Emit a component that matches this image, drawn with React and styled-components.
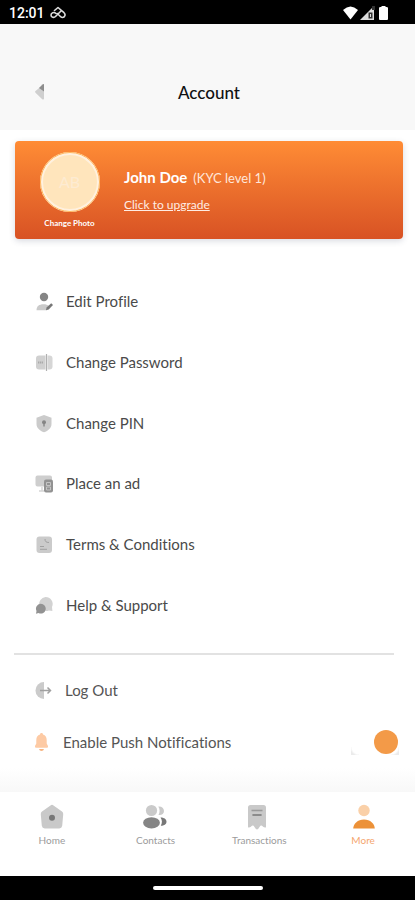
import React, { useState } from "react";
import styled, { createGlobalStyle } from "styled-components";

const GlobalStyle = createGlobalStyle`
  * {
    box-sizing: border-box;
  }

  body {
    margin: 0;
    background: #fff;
    font-family: Lato, "Liberation Sans", sans-serif;
    font-variant-ligatures: none;
  }

  button {
    border: 0;
    padding: 0;
    background: none;
    font-family: inherit;
    font-variant-ligatures: inherit;
    cursor: pointer;
  }
`;

const Screen = styled.div`
  display: flex;
  flex-direction: column;
  min-height: 100vh;
  background: #fff;
`;

const StatusBar = styled.div`
  display: flex;
  align-items: center;
  justify-content: space-between;
  height: 24px;
  padding: 2px 22px 0 9px;
  background: #000;
  color: #fff;
  font-family: Roboto, sans-serif;
  font-size: 14px;
  font-weight: 500;
`;

const StatusGroup = styled.div`
  display: flex;
  align-items: center;
  gap: ${(props) => props.$gap}px;
`;

const Header = styled.header`
  display: grid;
  grid-template-columns: 80px 1fr 80px;
  align-items: center;
  height: 106px;
  padding-top: 31px;
  background: #f8f8f8;
`;

const BackButton = styled.button`
  display: flex;
  padding: 6px 0 8px 34px;
`;

const Title = styled.h1`
  margin: 0;
  padding-left: 3px;
  color: #111;
  font-size: 17px;
  font-weight: 500;
  line-height: 24px;
  text-align: center;
`;

const Main = styled.main`
  flex: 1;
  display: flex;
  flex-direction: column;
`;

const ProfileCard = styled.section`
  display: flex;
  gap: 24px;
  height: 98px;
  margin: 11px 12px 0 15px;
  padding: 11px 24px 0;
  border-radius: 4px;
  background: linear-gradient(#ff8c35, #d85224);
  box-shadow: 0 2px 6px rgba(60, 70, 100, 0.2);
  color: #fff;
`;

const PhotoButton = styled.button`
  display: flex;
  flex-direction: column;
  align-items: center;
  gap: 5px;
  width: 61px;
  color: #fff;
  font-size: 8px;
  font-weight: 700;
  line-height: 12px;
  white-space: nowrap;
`;

const Avatar = styled.span`
  display: flex;
  align-items: center;
  justify-content: center;
  width: 60px;
  height: 60px;
  border: 3px solid #fff1df;
  border-radius: 50%;
  outline: 1px solid #ffb65c;
  outline-offset: -1px;
  background: #ffe5bc;
  color: #fdebd2;
  font-size: 16px;
  font-weight: 400;
`;

const ProfileText = styled.div`
  display: flex;
  flex-direction: column;
  align-items: flex-start;
  gap: 9px;
  padding-top: 15px;
`;

const Name = styled.div`
  display: flex;
  align-items: baseline;
  gap: 6px;
  font-size: 15px;
  font-weight: 700;
  line-height: 20px;
`;

const Level = styled.span`
  color: #ffe6da;
  font-size: 13px;
  font-weight: 400;
`;

const UpgradeLink = styled.a`
  color: #ffede4;
  font-size: 12px;
  line-height: 16px;
`;

const Menu = styled.nav`
  display: flex;
  flex-direction: column;
  min-height: 364px;
  margin-top: 32px;
`;

const MenuButton = styled.button`
  flex: 1;
  display: flex;
  align-items: center;
  gap: 11px;
  padding: 0 35px;
  color: #4a4a4a;
  font-size: 15px;
  line-height: 20px;
`;

const Divider = styled.hr`
  height: 2px;
  margin: 18px 21px 0 14px;
  border: 0;
  background: #e2e2e2;
`;

const Extras = styled.div`
  display: flex;
  flex-direction: column;
  padding-top: 9px;
`;

const ExtraRow = styled.div`
  display: flex;
  align-items: center;
  justify-content: space-between;
  height: 52px;
  padding: 0 16px 0 34px;
  color: #555;
  font-size: 15px;
  line-height: 20px;
`;

const LogoutButton = styled.button`
  display: flex;
  align-items: center;
  gap: 11px;
  color: inherit;
  font-size: 15px;
  line-height: 20px;
`;

const SwitchLabel = styled.label`
  display: flex;
  align-items: center;
  gap: 14px;
`;

const Switch = styled.input`
  appearance: none;
  display: flex;
  align-items: center;
  justify-content: ${(props) => (props.checked ? "flex-end" : "flex-start")};
  width: 48px;
  height: 26px;
  margin: 0;
  padding-right: 1px;
  background: radial-gradient(circle at 100% 0, #fff 7px, #ebebeb 9px) 0 100% / 8px 8px no-repeat,
    radial-gradient(circle at 0 0, #fff 7px, #ebebeb 9px) 100% 100% / 8px 8px no-repeat;
  cursor: pointer;

  &::before {
    content: "";
    width: 24px;
    height: 24px;
    border-radius: 50%;
    background: ${(props) => (props.checked ? "#f39a48" : "#ccc")};
  }
`;

const Fade = styled.div`
  flex: 1;
  min-height: 22px;
  background: linear-gradient(#fff, #f8f8f8);
`;

const TabBar = styled.nav`
  display: grid;
  grid-template-columns: repeat(4, 1fr);
  height: 84px;
  padding-top: 12px;
  background: #fff;
`;

const TabButton = styled.button`
  display: flex;
  flex-direction: column;
  align-items: center;
  gap: 3px;
  height: 48px;
  color: ${(props) => (props.$active ? "#f5a66f" : "#9b9b9b")};
  font-size: 10px;
  line-height: 14px;
`;

const GestureBar = styled.div`
  display: flex;
  align-items: center;
  justify-content: center;
  height: 24px;
  background: #000;
`;

const GestureHandle = styled.div`
  width: 110px;
  height: 4px;
  border-radius: 2px;
  background: #fff;
`;

function Icon({ size = 20, children }) {
  return (
    <svg width={size} height={size} viewBox={`0 0 ${size} ${size}`} fill="none" aria-hidden="true">
      {children}
    </svg>
  );
}

const menuItems = [
  {
    label: "Edit Profile",
    icon: (
      <>
        <circle cx="9" cy="6" r="4.2" fill="#858585" />
        <path d="M1.5 19.2c0-4 2.5-6 7-6 2.2 0 4.2.6 5.500 1.800l-2.500 4.200z" fill="#cacaca" />
        <path d="M11 19.200l.6-2.800 4.600-4.200 1.800 1.700-4.300 4.600z" fill="#777" />
      </>
    ),
  },
  {
    label: "Change Password",
    icon: (
      <>
        <path d="M10.500 3.500H4a3 3 0 0 0-3 3v8a3 3 0 0 0 3 3h6.500z" fill="#d0d0d0" />
        <path d="M12.500 3.500h2a3 3 0 0 1 3 3v8a3 3 0 0 1-3 3h-2z" fill="#d6d6d6" />
        <path d="M11.500 2v17" stroke="#b0b0b0" strokeWidth="1.200" />
        <path d="M3 10.500h5" stroke="#aaa" strokeWidth="1.800" strokeDasharray="1.300 .6" />
      </>
    ),
  },
  {
    label: "Change PIN",
    icon: (
      <>
        <path d="M9 2l7.500 2.700v6.300c0 4-3.300 6.700-7.500 8.300-4.200-1.600-7.500-4.300-7.500-8.300V4.700z" fill="#cbcbcb" />
        <circle cx="9" cy="9.300" r="2" fill="#858585" />
        <path d="M9 9.500v4" stroke="#858585" strokeWidth="1.400" />
      </>
    ),
  },
  {
    label: "Place an ad",
    icon: (
      <>
        <path d="M2.500 2.500h12.500a2 2 0 0 1 2 2v9H2.500a2 2 0 0 1-2-2v-7a2 2 0 0 1 2-2z" fill="#cecece" />
        <path d="M4 18h5M7 14v3.500" stroke="#d5d5d5" strokeWidth="1.400" />
        <rect x="9" y="6.500" width="9" height="13" rx="2" fill="#929292" />
        <path d="M11.500 9.500h4v3h-4zm0 4.500h4v3h-4z" stroke="#c4c4c4" />
      </>
    ),
  },
  {
    label: "Terms & Conditions",
    icon: (
      <>
        <rect x="1.500" y="2.500" width="15.500" height="16.500" rx="3" fill="#cbcbcb" />
        <path d="M10 5c0 2.500 1 3.500 4 3.500M5 12.500h4m-4 2.800h7" stroke="#a0a0a0" />
      </>
    ),
  },
  {
    label: "Help & Support",
    icon: (
      <>
        <path d="M10.500 2a7 7 0 0 1 6.500 10l.4 4-3.500-.6a7 7 0 1 1-3.400-13.400z" fill="#d2d2d2" />
        <path d="M5.500 8.800a4.900 4.900 0 1 1-2 9.200l-2.500.7.500-2.800a4.900 4.900 0 0 1 4-7.100z" fill="#929292" />
      </>
    ),
  },
];

const tabs = [
  {
    label: "Home",
    icon: (
      <>
        <path d="M11.500 1.400q1.500-1.200 3 0l8.500 6.200q1.500 1.200 1.200 3l-1 11.200q-.4 2.600-3 2.600H5.800q-2.600 0-3-2.600l-1-11.200q-.3-1.800 1.200-3z" fill="#c9c9c9" />
        <circle cx="13" cy="13.800" r="3" fill="#777" />
      </>
    ),
  },
  {
    label: "Contacts",
    icon: (
      <>
        <circle cx="8.500" cy="6.500" r="5.600" fill="#cacaca" />
        <path d="M15.300 2.500c3.200-.4 5.700 1.500 5.700 4.500s-2.500 4.500-5.500 4c1.500-2.700 1.500-5.800-.2-8.500z" fill="#cacaca" />
        <ellipse cx="8.500" cy="18.800" rx="8.400" ry="5.600" fill="#858585" />
        <path d="M17.500 13.600c3.500 0 6 1.600 6 4.100 0 2.400-2.300 4-5.700 4 1.600-2.600 1.500-5.500-.3-8.100z" fill="#777" />
      </>
    ),
  },
  {
    label: "Transactions",
    icon: (
      <>
        <path d="M4.500 1h13a2.500 2.500 0 0 1 2.500 2.500v19.700q-2 .8-4-1.500-1.500-.5-2.500 1.300-1.500 2.500-2.500 2.500t-2.500-2.500q-1-1.800-2.500-1.300-2 2.300-4 1.500V3.500A2.500 2.500 0 0 1 4.500 1z" fill="#c9c9c9" />
        <path d="M5.500 6.500h11" stroke="#999" strokeWidth="1.600" />
        <path d="M7 11h8" stroke="#777" strokeWidth="1.600" strokeLinecap="round" />
      </>
    ),
  },
  {
    label: "More",
    active: true,
    icon: (
      <>
        <circle cx="14" cy="6.500" r="5.700" fill="#fad0a8" />
        <path d="M3.200 24.500c.3-5 4.500-9 10.800-9s10.500 4 10.800 9z" fill="#ec9138" />
      </>
    ),
  },
];

function App() {
  const [pushEnabled, setPushEnabled] = useState(true);

  return (
    <>
      <GlobalStyle />
      <Screen>
        <StatusBar>
          <StatusGroup $gap={5}>
            <span>12:01</span>
            <Icon size={16}>
              <path d="M4.500 5.500L8 2.500l6 5.200c2 2 .8 4.800-1.500 4.800-1.500 0-2.500-1-5-4M11.500 5.500l-6 6c-1.500 1.500-4.500 1-4.500-1.500 0-2.300 3-3.500 5-1.500" stroke="#ddd" strokeWidth="1.600" strokeLinecap="round" strokeLinejoin="round" />
            </Icon>
          </StatusGroup>
          <StatusGroup $gap={2}>
            <svg width="15" height="14" viewBox="0 0 15 14" aria-hidden="true">
              <path d="M0 4Q7.500-3 15 4L7.500 13.500z" fill="#fff" />
            </svg>
            <svg width="15" height="14" viewBox="0 0 15 14" aria-hidden="true">
              <path d="M0 14L14 0v14z" fill="#ddd" />
              <path d="M8.500 6.500h4v6h-4zM12 0h3v4h-3z" fill="#333" />
              <path d="M10.500 8v3" stroke="#ddd" />
            </svg>
            <Icon size={16}>
              <path d="M4.500 1h4v1h1q1.500 0 1.500 1v11q0 1-1 1H3q-1 0-1-1V3q0-1 1.500-1h1z" fill="#fff" />
            </Icon>
          </StatusGroup>
        </StatusBar>

        <Header>
          <BackButton aria-label="Back">
            <svg width="12" height="18" viewBox="0 0 12 18" aria-hidden="true">
              <path d="M1.500 8l8.500-7v15q-1 1-2 0L1.500 9.700Q.5 8.800 1.500 8z" fill="#cfcfcf" />
              <path d="M5 5l3.500-3.500Q10 .5 10 2v6.500z" fill="#8d8d8d" />
            </svg>
          </BackButton>
          <Title>Account</Title>
        </Header>

        <Main>
          <ProfileCard>
            <PhotoButton>
              <Avatar>AB</Avatar>
              Change Photo
            </PhotoButton>
            <ProfileText>
              <Name>
                John Doe <Level>(KYC level 1)</Level>
              </Name>
              <UpgradeLink href="#upgrade">Click to upgrade</UpgradeLink>
            </ProfileText>
          </ProfileCard>

          <Menu>
            {menuItems.map((item) => (
              <MenuButton key={item.label}>
                <Icon>{item.icon}</Icon>
                {item.label}
              </MenuButton>
            ))}
          </Menu>

          <Divider />

          <Extras>
            <ExtraRow>
              <LogoutButton>
                <Icon>
                  <path d="M10 2v17A8.500 8.500 0 0 1 10 2z" fill="#cbcbcb" />
                  <path d="M6 10.500h10m-2.500-3l3 3-3 3" stroke="#a0a0a0" strokeWidth="1.500" />
                </Icon>
                Log Out
              </LogoutButton>
            </ExtraRow>
            <ExtraRow>
              <SwitchLabel htmlFor="push">
                <svg width="15" height="20" viewBox="0 0 15 20" aria-hidden="true">
                  <path d="M7.500 1c1 0 1.500.7 1.500 1.500 2.500.8 3.700 2.800 3.700 5.500v3.500l1.300 2.500q.5 1.700-1 1.700H2q-1.500 0-1-1.700l1.300-2.500V8c0-2.700 1.200-4.700 3.700-5.500C6 1.700 6.500 1 7.500 1z" fill="#fdcaa4" />
                  <path d="M5 17h5q-.5 2-2.500 2T5 17z" fill="#f6b481" />
                </svg>
                Enable Push Notifications
              </SwitchLabel>
              <Switch
                id="push"
                type="checkbox"
                checked={pushEnabled}
                onChange={(e) => setPushEnabled(e.target.checked)}
              />
            </ExtraRow>
          </Extras>
          <Fade />
        </Main>

        <TabBar>
          {tabs.map((tab) => (
            <TabButton key={tab.label} $active={tab.active}>
              <Icon size={26}>{tab.icon}</Icon>
              {tab.label}
            </TabButton>
          ))}
        </TabBar>

        <GestureBar>
          <GestureHandle />
        </GestureBar>
      </Screen>
    </>
  );
}

export default App;
